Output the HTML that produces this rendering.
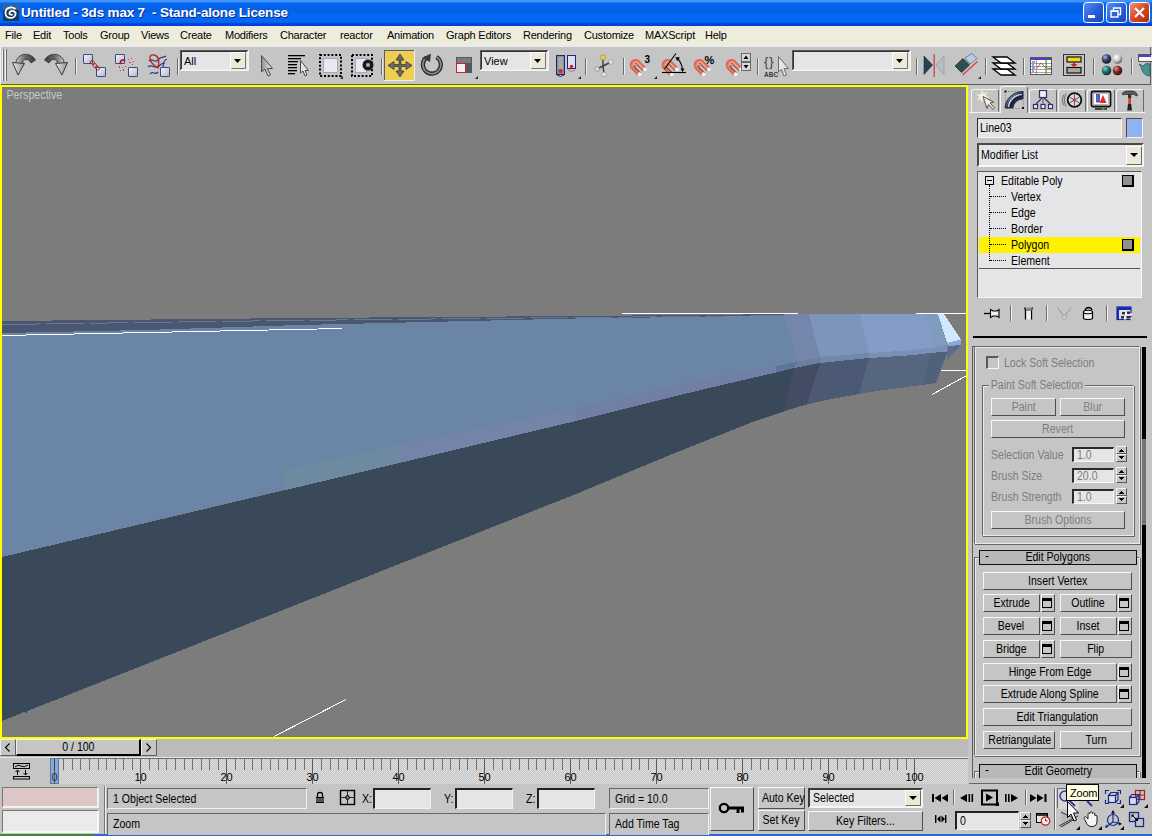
<!DOCTYPE html>
<html>
<head>
<meta charset="utf-8">
<title>3ds max 7</title>
<style>
html,body{margin:0;padding:0;}
body{width:1152px;height:836px;overflow:hidden;background:#c5c5c5;font-family:"Liberation Sans",sans-serif;font-size:11px;color:#000;position:relative;}
.a{position:absolute;}
.t{position:absolute;white-space:nowrap;line-height:14px;font-size:12px;}
/* title */
#title{left:0;top:0;width:1152px;height:26px;background:linear-gradient(#3d95fc 0px,#3d95fc 1.5px,#0c6af0 3px,#0562ea 5px,#0560e8 12px,#0568f5 14px,#0568f5 22px,#0448de 23.5px,#033cd0 26px);}
#title .txt{left:21px;top:5px;font-size:13.5px;font-weight:bold;color:#fff;line-height:16px;text-shadow:1px 1px 0 #0a2a80;letter-spacing:-0.18px;}
.cb{position:absolute;top:2px;width:19px;height:19px;border:1px solid #fff;border-radius:3px;background:linear-gradient(135deg,#4a86ee,#2558d6 60%,#1c46b8);}
/* menu */
#menu{left:0;top:26px;width:1152px;height:19px;background:#eeeddc;}
#menu span{position:absolute;top:2px;font-size:11px;line-height:14px;white-space:nowrap;letter-spacing:-0.22px;}
/* toolbar */
#tb{left:0;top:46px;width:1152px;height:39px;background:#c5c5c5;}
/* viewport */
#vp{left:0;top:85px;width:968px;height:654px;background:#ffff00;}
#vp svg{position:absolute;left:2px;top:2px;}
/* panel */
#panel{left:968px;top:85px;width:184px;height:693px;background:#c5c5c5;}
.btn{position:absolute;height:16px;border:1px solid;border-color:#f4f4f4 #5a5a5a #5a5a5a #f4f4f4;background:#c5c5c5;font-size:12px;line-height:16px;text-align:center;white-space:nowrap;box-sizing:content-box;}
.dis{color:#7d7d7d;}

.x{position:absolute;white-space:nowrap;font-size:12px;line-height:13px;margin-top:1px;transform:scaleX(.88);transform-origin:0 0;}
.s{display:inline-block;transform:scaleX(.88);transform-origin:50% 50%;}
.sunk{position:absolute;box-sizing:border-box;border:1px solid;border-color:#4a4a4a #f6f6f6 #f6f6f6 #4a4a4a;background:#e5e5e7;}
.rb{position:absolute;box-sizing:border-box;border:1px solid;border-color:#f6f6f6 #4e4e4e #4e4e4e #f6f6f6;background:#c5c5c5;font-size:12px;line-height:15px;text-align:center;white-space:nowrap;}
.rb.d{color:#808080;line-height:16px;}
.set{position:absolute;box-sizing:border-box;width:14px;height:18px;border:1px solid;border-color:#f6f6f6 #4e4e4e #4e4e4e #f6f6f6;background:#c5c5c5;}
.set i{position:absolute;left:0px;top:3px;width:8px;height:6px;border:1px solid #000;border-top-width:3px;background:#c5c5c5;}
.roll{position:absolute;box-sizing:border-box;border:1px solid;border-color:#666 #eaeaea #eaeaea #666;box-shadow:inset 1px 1px 0 #eaeaea, 1px 1px 0 #666;}
.rh{position:absolute;box-sizing:border-box;height:15px;background:#b8b8b8;border:1px solid;border-color:#111;font-size:12px;line-height:12px;text-align:center;}
.rh b{position:absolute;left:5px;top:-1px;font-weight:normal;}
.tab{position:absolute;top:89px;width:28px;height:23px;box-sizing:border-box;border:1px solid;border-color:#f4f4f4 #6a6a6a transparent #f4f4f4;border-radius:3px 3px 0 0;background:#c5c5c5;}
.sep{position:absolute;width:1px;background:#6e6e6e;box-shadow:1px 0 0 #f0f0f0;}
.spin{position:absolute;width:11px;height:16px;}
.spin:before,.spin:after{content:"";position:absolute;left:0;width:11px;height:8px;box-sizing:border-box;border:1px solid;border-color:#f4f4f4 #555 #555 #f4f4f4;background:
 linear-gradient(#000,#000) 4px 2px/1px 1px no-repeat,linear-gradient(#000,#000) 3px 3px/3px 1px no-repeat,linear-gradient(#000,#000) 2px 4px/5px 1px no-repeat,#c5c5c5;}
.spin:before{top:0;}
.spin:after{top:8px;transform:scaleY(-1);border-color:#555 #555 #f4f4f4 #f4f4f4;}
</style>
</head>
<body>
<!-- TITLE BAR -->
<div id="title" class="a">
  <div class="t txt">Untitled - 3ds max 7&nbsp; - Stand-alone License</div>
  <svg class="a" style="left:0;top:0" width="1152" height="26" viewBox="0 0 1152 26">
  <defs><linearGradient id="cbb" x1="0" y1="0" x2="1" y2="1"><stop offset="0" stop-color="#5b92f4"/><stop offset=".5" stop-color="#2a5fdc"/><stop offset="1" stop-color="#1a44b4"/></linearGradient>
  <linearGradient id="cbr" x1="0" y1="0" x2="1" y2="1"><stop offset="0" stop-color="#f09a78"/><stop offset=".5" stop-color="#d8481e"/><stop offset="1" stop-color="#b02a0c"/></linearGradient></defs>
  <rect x="3" y="5" width="16" height="16" fill="#163c5c"/><rect x="3" y="5" width="16" height="5" fill="#5c7c94" opacity=".6"/>
  <path d="M15.500,9 C11,5.500 5,8 5.500,13.500 C6,19 14,19.500 15.500,14.500 C16.500,11 11,9.500 9.500,12.500 C8.800,14.500 11.500,15.500 12.500,14" fill="none" stroke="#fff" stroke-width="1.700"/>
  <rect x="1083.500" y="2.500" width="20" height="20" rx="3" fill="url(#cbb)" stroke="#fff"/><rect x="1088" y="15" width="7" height="3" fill="#fff"/>
  <rect x="1106.500" y="2.500" width="20" height="20" rx="3" fill="url(#cbb)" stroke="#fff"/>
  <path d="M1113.500,10.500 V8 H1120.500 V14.500 H1118" fill="none" stroke="#fff" stroke-width="1.400"/><rect x="1111" y="11" width="7" height="6" fill="none" stroke="#fff" stroke-width="1.400"/><rect x="1111" y="10.500" width="7" height="1.500" fill="#fff"/>
  <rect x="1129.500" y="2.500" width="20" height="20" rx="3" fill="url(#cbr)" stroke="#fff"/><path d="M1135,8 L1144,17 M1144,8 L1135,17" stroke="#fff" stroke-width="2.200"/>
  </svg>
</div>
<!-- MENU -->
<div id="menu" class="a">
<span style="left:5px">File</span><span style="left:33px">Edit</span><span style="left:63px">Tools</span><span style="left:100px">Group</span><span style="left:141px">Views</span><span style="left:180px">Create</span><span style="left:225px">Modifiers</span><span style="left:280px">Character</span><span style="left:340px">reactor</span><span style="left:387px">Animation</span><span style="left:446px">Graph Editors</span><span style="left:523px">Rendering</span><span style="left:584px">Customize</span><span style="left:645px">MAXScript</span><span style="left:705px">Help</span>
</div>
<!-- TOOLBAR -->
<!--TB--><svg class="a" style="left:0;top:46px" width="1152" height="39" viewBox="0 46 1152 39">
<defs>
<linearGradient id="gq" x1="0" y1="0" x2="1" y2="1"><stop offset="0" stop-color="#f4f4fa"/><stop offset="1" stop-color="#b4b8cc"/></linearGradient>
<linearGradient id="gbody" x1="0" y1="0" x2="1" y2="0"><stop offset="0" stop-color="#c8c8c8"/><stop offset=".45" stop-color="#6a6a6a"/><stop offset="1" stop-color="#3a3a3a"/></linearGradient><linearGradient id="gbody2" x1="1" y1="0" x2="0" y2="0"><stop offset="0" stop-color="#c8c8c8"/><stop offset=".45" stop-color="#6a6a6a"/><stop offset="1" stop-color="#3a3a3a"/></linearGradient><linearGradient id="gcur" x1="0" y1="0" x2="1" y2="0"><stop offset="0" stop-color="#8e8e8e"/><stop offset="1" stop-color="#f2f2f2"/></linearGradient><linearGradient id="garr" x1="0" y1="0" x2="1" y2="0"><stop offset="0" stop-color="#f0f0f0"/><stop offset="1" stop-color="#8a8a8a"/></linearGradient>
<radialGradient id="sp1" cx=".35" cy=".3" r=".7"><stop offset="0" stop-color="#aab4d8"/><stop offset=".5" stop-color="#3a4468"/><stop offset="1" stop-color="#15192c"/></radialGradient>
<radialGradient id="sp2" cx=".35" cy=".3" r=".7"><stop offset="0" stop-color="#ffffff"/><stop offset=".6" stop-color="#c8c8c8"/><stop offset="1" stop-color="#606060"/></radialGradient>
<radialGradient id="sp3" cx=".35" cy=".3" r=".7"><stop offset="0" stop-color="#7fd0c0"/><stop offset=".5" stop-color="#1e7a6e"/><stop offset="1" stop-color="#0a2e2a"/></radialGradient>
<radialGradient id="sp4" cx=".35" cy=".3" r=".7"><stop offset="0" stop-color="#e09a90"/><stop offset=".5" stop-color="#8a2a24"/><stop offset="1" stop-color="#360c0a"/></radialGradient>
</defs>
<rect x="0" y="46" width="1152" height="39" fill="#c5c5c5"/>

<rect x="1" y="84" width="1150" height="1" fill="#5a5a5a"/>
<rect x="1150" y="47" width="1" height="38" fill="#5a5a5a"/>
<rect x="2" y="49" width="1" height="32" fill="#f0f0f0"/><rect x="3" y="49" width="1" height="32" fill="#6e6e6e"/>
<rect x="5" y="49" width="1" height="32" fill="#f0f0f0"/><rect x="6" y="49" width="1" height="32" fill="#6e6e6e"/><rect x="0" y="47" width="1" height="37" fill="#f0f0f0"/>
<!-- undo -->
<path d="M16,63.500 C15.500,54.500 29,50 35.500,60 L31,63 C28.500,58 22.500,58.500 22.500,64 Z" fill="url(#gbody)" stroke="#3a3a3a" stroke-width=".9"/>
<path d="M12.500,62.500 L24.500,63.500 L18,75 Z" fill="url(#garr)" stroke="#3c3c3c" stroke-width="1" stroke-linejoin="round"/>
<!-- redo -->
<path d="M64,63.500 C64.500,54.500 51,50 44.500,60 L49,63 C51.500,58 57.500,58.500 57.500,64 Z" fill="url(#gbody2)" stroke="#3a3a3a" stroke-width=".9"/>
<path d="M67.500,62.500 L55.500,63.500 L62,75 Z" fill="url(#garr)" stroke="#3c3c3c" stroke-width="1" stroke-linejoin="round"/>
<rect x="75" y="58" width="1" height="17" fill="#6b6b6b"/><rect x="76" y="58" width="1" height="17" fill="#eeeeee"/>
<!-- link -->
<rect x="83.500" y="54.500" width="9" height="9" rx=".5" fill="url(#gq)" stroke="#3a4a7a"/>
<rect x="96.500" y="67.500" width="9" height="9" rx=".5" fill="url(#gq)" stroke="#3a4a7a"/>
<ellipse cx="92.500" cy="62.500" rx="1.700" ry="2.300" fill="none" stroke="#b01818" stroke-width=".9" transform="rotate(-45 92.500 62.500)"/>
<ellipse cx="95" cy="65.500" rx="1.700" ry="2.300" fill="none" stroke="#b01818" stroke-width=".9" transform="rotate(-45 95 65.500)"/>
<ellipse cx="97.500" cy="68" rx="1.700" ry="2.300" fill="none" stroke="#b01818" stroke-width=".9" transform="rotate(-45 97.500 68)"/>
<!-- unlink -->
<rect x="115.500" y="54.500" width="9" height="9" rx=".5" fill="url(#gq)" stroke="#3a4a7a"/>
<rect x="128.500" y="67.500" width="9" height="9" rx=".5" fill="url(#gq)" stroke="#3a4a7a"/>
<path d="M121,64 A2.500,2.500 0 0 1 125,61" fill="none" stroke="#b01818" stroke-width="1.600"/>
<g fill="#d04040"><rect x="128" y="59" width="1" height="1"/><rect x="131" y="58" width="1" height="1"/><rect x="133" y="61" width="1" height="1"/><rect x="129" y="62" width="2" height="1"/><rect x="132" y="64" width="1" height="1"/><rect x="119" y="66" width="1" height="2"/><rect x="122" y="67" width="1" height="1"/><rect x="120" y="70" width="1" height="1"/><rect x="123" y="69" width="1" height="2"/><rect x="125" y="66" width="1" height="1"/></g>
<!-- bind to space warp -->
<g fill="none" stroke-width="1.300"><path d="M149,61 C152,57 155,64 158,60 S163,58 166,56" stroke="#2a3a8a"/><path d="M148,67 C152,63 155,70 159,66 S162,64 165,63" stroke="#2a3a8a"/><path d="M150,74 C153,70 155,76 158,72" stroke="#2a3a8a"/><path d="M163,68 C163,62 164,60 167,59" stroke="#2a3a8a"/>
<path d="M158,68 C148,62 148,54 154,55 C160,56 159,64 158,68 Z" stroke="#c02020"/></g>
<rect x="160.500" y="67.500" width="9" height="9" rx=".5" fill="url(#gq)" stroke="#3a4a7a"/>
<rect x="177" y="58" width="1" height="17" fill="#6b6b6b"/><rect x="178" y="58" width="1" height="17" fill="#eeeeee"/>
<rect x="180" y="50" width="69" height="21" fill="#f4f4f4"/><rect x="180" y="50" width="68" height="20" fill="#555"/><rect x="181" y="51" width="67" height="19" fill="#eeeeee"/><rect x="181" y="51" width="66" height="18" fill="#333"/><rect x="182" y="52" width="65" height="17" fill="#e5e5e7"/>
<rect x="230" y="52" width="16" height="17" fill="#ece9d8"/><path d="M230.5,68.5 V52.5 H246" stroke="#fff" fill="none"/><path d="M231.5,68.5 H245.5 V52.5" stroke="#77756a" fill="none"/><polygon points="234,59 241,59 237.5,63" fill="#000"/><text x="184" y="65" font-size="11" font-family="Liberation Sans, sans-serif" fill="#000">All</text>
<!-- select arrow -->
<path d="M261.500,55.500 V72 L265,69 L268,76 L270.500,75 L267.500,68.500 L272.500,68.500 Z" fill="url(#gcur)" stroke="#4a4a4a" stroke-width="1"/>
<!-- select by name -->
<g fill="#000"><rect x="288" y="55" width="17" height="1.300"/><rect x="288" y="58" width="13" height="1.300"/><rect x="288" y="61" width="10" height="1.300"/><rect x="288" y="64" width="9" height="1.300"/><rect x="288" y="67" width="9" height="1.300"/><rect x="288" y="70" width="9" height="1.300"/><rect x="288" y="73" width="7" height="1.300"/></g>
<path d="M300.500,60.500 V73 L303,71 L305,76 L307,75 L305,70.500 L308.500,70.500 Z" fill="#e4e4e4" stroke="#4a4a4a" stroke-width="1"/>
<!-- rect region -->
<rect x="320" y="55" width="21" height="21" fill="none" stroke="#000" stroke-width="2" stroke-dasharray="2 1.800"/>
<rect x="323.500" y="58.500" width="14" height="14" fill="#e8e8f0" stroke="#a8a8b8"/>
<polygon points="340,79 343,79 343,76" fill="#222"/>
<!-- window crossing -->
<rect x="352" y="55" width="20" height="21" fill="none" stroke="#000" stroke-width="2" stroke-dasharray="2 1.800"/>
<rect x="355.500" y="58.500" width="11" height="14" fill="#e8e8f0" stroke="#a8a8b8"/>
<circle cx="368" cy="65" r="5.500" fill="#1a1a1a"/><circle cx="368" cy="65" r="2" fill="#b0b0b0"/>
<rect x="381" y="58" width="1" height="17" fill="#6b6b6b"/><rect x="382" y="58" width="1" height="17" fill="#eeeeee"/>
<!-- move (active) -->
<rect x="384" y="50" width="31" height="31" fill="#efefef"/><rect x="384" y="50" width="30" height="30" fill="#5c5c5c"/><rect x="385" y="51" width="29" height="29" fill="#e8d070"/>
<rect x="386" y="52" width="28" height="27" fill="#efcf4f"/>
<path d="M400,54 L404,60 L401,60 L401,64.500 L406,64.500 L406,61.500 L412,65.500 L406,69.500 L406,66.500 L401,66.500 L401,71 L404,71 L400,77 L396,71 L399,71 L399,66.500 L394,66.500 L394,69.500 L388,65.500 L394,61.500 L394,64.500 L399,64.500 L399,60 L396,60 Z" fill="#6a6a6a" stroke="#3a3a3a" stroke-width=".8"/>
<!-- rotate -->
<path d="M426.500,57.500 A9,9 0 1 0 436.500,57" fill="none" stroke="#2a2a2a" stroke-width="4.200"/>
<path d="M426.500,57.500 A9,9 0 1 0 436.500,57" fill="none" stroke="#8a8a8a" stroke-width="1.600"/>
<path d="M422,58 L431,53.500 L430,62 Z" fill="#3a3a3a"/>
<!-- scale -->
<rect x="456" y="57" width="16" height="16" fill="#55585e"/><rect x="457" y="58" width="14" height="5" fill="#777a82"/>
<rect x="456.500" y="63.500" width="9" height="9" fill="#f0f0f0" stroke="#d02020"/>
<polygon points="475,79 478,79 478,76" fill="#222"/>
<rect x="480" y="50" width="69" height="21" fill="#f4f4f4"/><rect x="480" y="50" width="68" height="20" fill="#555"/><rect x="481" y="51" width="67" height="19" fill="#eeeeee"/><rect x="481" y="51" width="66" height="18" fill="#333"/><rect x="482" y="52" width="65" height="17" fill="#e5e5e7"/>
<rect x="530" y="52" width="16" height="17" fill="#ece9d8"/><path d="M530.5,68.5 V52.5 H546" stroke="#fff" fill="none"/><path d="M531.5,68.5 H545.5 V52.5" stroke="#77756a" fill="none"/><polygon points="534,59 541,59 537.5,63" fill="#000"/><text x="484" y="65" font-size="11" font-family="Liberation Sans, sans-serif" fill="#000">View</text>
<!-- pivot -->
<rect x="556.500" y="55.500" width="8" height="19" fill="#8a8a8a" stroke="#1a2a7a"/><rect x="558" y="57" width="5" height="12" fill="#a8a8a8"/>
<circle cx="560.500" cy="71" r="2" fill="#e02020"/><path d="M557,75 Q560.500,78 564,75" stroke="#1a2a7a" fill="none"/>
<rect x="567.500" y="55.500" width="8" height="13" fill="#e0e0ea" stroke="#1a2a7a"/><circle cx="571.500" cy="66.500" r="1.800" fill="#e02020"/><path d="M568,70 Q571.500,73 575,70" stroke="#c07070" fill="none"/>
<polygon points="578,79 581,79 581,76" fill="#222"/>
<rect x="585" y="58" width="1" height="17" fill="#6b6b6b"/><rect x="586" y="58" width="1" height="17" fill="#eeeeee"/>
<!-- manipulate -->
<g stroke="#3a3a3a" stroke-width="1.400"><line x1="603" y1="66" x2="603" y2="57"/><line x1="603" y1="66" x2="611" y2="62"/><line x1="603" y1="66" x2="597" y2="69"/><line x1="603" y1="66" x2="604" y2="74"/></g>
<circle cx="603" cy="57.500" r="2.600" fill="#e8d040" stroke="#9a8820" stroke-width=".6"/><circle cx="611" cy="62" r="2.400" fill="#e0e0e0" stroke="#888" stroke-width=".6"/><circle cx="597" cy="69" r="2.400" fill="#d8d8d8" stroke="#888" stroke-width=".6"/><circle cx="604" cy="74.500" r="2.400" fill="#e0e0e0" stroke="#888" stroke-width=".6"/>
<rect x="623" y="58" width="1" height="17" fill="#6b6b6b"/><rect x="624" y="58" width="1" height="17" fill="#eeeeee"/>
<g transform="translate(630,60)"><path d="M9.3,14 L2.8,7.3 A3.55,3.55 0 0 1 7.8,2.3 L14.6,9.2" fill="none" stroke="#b84a38" stroke-width="4.400"/><path d="M9.3,14 L2.8,7.3 A3.55,3.55 0 0 1 7.8,2.3 L14.6,9.2" fill="none" stroke="#ea735c" stroke-width="3.200"/><path d="M3.200,5.600 A3,3 0 0 1 7,2.200 L12.500,7.800" fill="none" stroke="#f8b4a2" stroke-width="1.100"/><path d="M10,13 L5,8 A1.600,1.600 0 0 1 7.300,5.600 L12.800,11" fill="none" stroke="#3a3030" stroke-width=".7" opacity=".75"/><rect x="8" y="12.600" width="3.200" height="3.200" fill="#fafafa" transform="rotate(45 9.600 14.200)"/><rect x="13.200" y="7.600" width="3.200" height="3.200" fill="#fafafa" transform="rotate(45 14.800 9.200)"/></g>
<text x="644.500" y="63" font-size="10" font-weight="bold" font-family="Liberation Sans, sans-serif" fill="#000">3</text>
<polygon points="654,79 657,79 657,76" fill="#222"/>
<g transform="translate(662,60)"><path d="M9.3,14 L2.8,7.3 A3.55,3.55 0 0 1 7.8,2.3 L14.6,9.2" fill="none" stroke="#b84a38" stroke-width="4.400"/><path d="M9.3,14 L2.8,7.3 A3.55,3.55 0 0 1 7.8,2.3 L14.6,9.2" fill="none" stroke="#ea735c" stroke-width="3.200"/><path d="M3.200,5.600 A3,3 0 0 1 7,2.200 L12.500,7.800" fill="none" stroke="#f8b4a2" stroke-width="1.100"/><path d="M10,13 L5,8 A1.600,1.600 0 0 1 7.300,5.600 L12.800,11" fill="none" stroke="#3a3030" stroke-width=".7" opacity=".75"/><rect x="8" y="12.600" width="3.200" height="3.200" fill="#fafafa" transform="rotate(45 9.600 14.200)"/><rect x="13.200" y="7.600" width="3.200" height="3.200" fill="#fafafa" transform="rotate(45 14.800 9.200)"/></g>
<g stroke="#000" stroke-width="1.100" fill="none"><line x1="662" y1="72.500" x2="686" y2="72.500"/><line x1="664.500" y1="69" x2="676" y2="53.500"/><path d="M677.500,58.500 Q682,63 682.500,70"/></g><path d="M675.500,57 L680,57.500 L677,61 Z M680.500,68.500 L684.500,68.500 L682.500,72 Z" fill="#000"/>
<g transform="translate(694,60)"><path d="M9.3,14 L2.8,7.3 A3.55,3.55 0 0 1 7.8,2.3 L14.6,9.2" fill="none" stroke="#b84a38" stroke-width="4.400"/><path d="M9.3,14 L2.8,7.3 A3.55,3.55 0 0 1 7.8,2.3 L14.6,9.2" fill="none" stroke="#ea735c" stroke-width="3.200"/><path d="M3.200,5.600 A3,3 0 0 1 7,2.200 L12.500,7.800" fill="none" stroke="#f8b4a2" stroke-width="1.100"/><path d="M10,13 L5,8 A1.600,1.600 0 0 1 7.300,5.600 L12.800,11" fill="none" stroke="#3a3030" stroke-width=".7" opacity=".75"/><rect x="8" y="12.600" width="3.200" height="3.200" fill="#fafafa" transform="rotate(45 9.600 14.200)"/><rect x="13.200" y="7.600" width="3.200" height="3.200" fill="#fafafa" transform="rotate(45 14.800 9.200)"/></g>
<text x="704.500" y="63.500" font-size="11" font-weight="bold" font-family="Liberation Sans, sans-serif" fill="#000">%</text>
<g transform="translate(726,60)"><path d="M9.3,14 L2.8,7.3 A3.55,3.55 0 0 1 7.8,2.3 L14.6,9.2" fill="none" stroke="#b84a38" stroke-width="4.400"/><path d="M9.3,14 L2.8,7.3 A3.55,3.55 0 0 1 7.8,2.3 L14.6,9.2" fill="none" stroke="#ea735c" stroke-width="3.200"/><path d="M3.200,5.600 A3,3 0 0 1 7,2.200 L12.500,7.800" fill="none" stroke="#f8b4a2" stroke-width="1.100"/><path d="M10,13 L5,8 A1.600,1.600 0 0 1 7.300,5.600 L12.800,11" fill="none" stroke="#3a3030" stroke-width=".7" opacity=".75"/><rect x="8" y="12.600" width="3.200" height="3.200" fill="#fafafa" transform="rotate(45 9.600 14.200)"/><rect x="13.200" y="7.600" width="3.200" height="3.200" fill="#fafafa" transform="rotate(45 14.800 9.200)"/></g>
<rect x="741" y="53" width="10" height="18" fill="#6a6a6a"/><rect x="742" y="54" width="8" height="7" fill="#d8d8d8"/><rect x="742" y="63" width="8" height="7" fill="#d8d8d8"/><path d="M743.500,59 L746,55.500 L748.500,59 Z M743.500,65 L746,68.500 L748.500,65 Z" fill="#000"/>
<rect x="757" y="58" width="1" height="17" fill="#6b6b6b"/><rect x="758" y="58" width="1" height="17" fill="#eeeeee"/>
<!-- named selection -->
<text x="764" y="66" font-size="13" font-family="Liberation Sans, sans-serif" fill="#3a3a3a" letter-spacing="1">{}</text>
<text x="764" y="76.500" font-size="6.500" font-weight="bold" font-family="Liberation Sans, sans-serif" fill="#3a3a3a">ABC</text>
<path d="M778.500,56.500 V72 L781.500,69.500 L784,76 L786.500,75 L784,68.500 L788.500,68.500 Z" fill="#e5e5e7" stroke="#6a6a6a" stroke-width="1"/>
<rect x="792" y="50" width="119" height="21" fill="#f4f4f4"/><rect x="792" y="50" width="118" height="20" fill="#555"/><rect x="793" y="51" width="117" height="19" fill="#eeeeee"/><rect x="793" y="51" width="116" height="18" fill="#333"/><rect x="794" y="52" width="115" height="17" fill="#e5e5e7"/>
<rect x="892" y="52" width="16" height="17" fill="#ece9d8"/><path d="M892.5,68.5 V52.5 H908" stroke="#fff" fill="none"/><path d="M893.5,68.5 H907.5 V52.5" stroke="#77756a" fill="none"/><polygon points="896,59 903,59 899.5,63" fill="#000"/>
<rect x="916" y="58" width="1" height="17" fill="#6b6b6b"/><rect x="917" y="58" width="1" height="17" fill="#eeeeee"/>
<!-- mirror -->
<path d="M924,56 L932.500,65 L924,74.500 Z" fill="#2a4250" stroke="#1a2a32" stroke-width=".6"/><rect x="933.500" y="54" width="1.400" height="23" fill="#c85050"/><path d="M944,56 L936,65 L944,74.500 Z" fill="#b8bcc4" stroke="#8a8e96" stroke-width=".6"/>
<!-- align -->
<path d="M955,66 L963,58.500 L969.500,65 L961.500,72.500 Z" fill="#2e4e52" stroke="#1a3034" stroke-width=".8"/><path d="M965,58 L972,53.500 L977,58.500 L970,64 Z" fill="#b8cce4" stroke="#5a6a7a" stroke-width=".8"/><line x1="962.500" y1="75" x2="977.500" y2="61.500" stroke="#e04040" stroke-width="1.400"/>
<polygon points="978,79 981,79 981,76" fill="#222"/>
<rect x="985" y="58" width="1" height="17" fill="#6b6b6b"/><rect x="986" y="58" width="1" height="17" fill="#eeeeee"/>
<!-- layers -->
<g fill="#fff" stroke="#000" stroke-width="1.300" stroke-linejoin="miter"><path d="M993,69 L1007,69 L1015,75 L1001,75 Z"/><path d="M993,63 L1007,63 L1015,69 L1001,69 Z"/><path d="M993,57 L1007,57 L1015,63 L1001,63 Z"/></g>
<rect x="1023" y="58" width="1" height="17" fill="#6b6b6b"/><rect x="1024" y="58" width="1" height="17" fill="#eeeeee"/>
<!-- curve editor -->
<rect x="1030.500" y="57.500" width="21" height="17" fill="#fff" stroke="#555"/><rect x="1031" y="58" width="20" height="2" fill="#4a40c8"/>
<g stroke="#888" stroke-width=".8"><line x1="1031" y1="63.500" x2="1051" y2="63.500"/><line x1="1031" y1="66.500" x2="1051" y2="66.500"/><line x1="1031" y1="69.500" x2="1051" y2="69.500"/><line x1="1031" y1="72.500" x2="1051" y2="72.500"/><line x1="1036.500" y1="60" x2="1036.500" y2="74"/></g>
<g fill="#3030c0"><rect x="1032" y="61.500" width="3" height="1"/><rect x="1032" y="64.500" width="2" height="1"/><rect x="1032" y="67.500" width="3" height="1"/><rect x="1032" y="70.500" width="2" height="1"/></g>
<path d="M1037,68 L1041,63 L1043,65 L1046,68 L1051,68.500" stroke="#d04040" fill="none" stroke-width="1"/><rect x="1045.500" y="60" width="1.200" height="14.500" fill="#30a030"/>
<!-- schematic -->
<rect x="1063.500" y="54.500" width="21" height="21" fill="#c5c5c5" stroke="#333"/><rect x="1067" y="57" width="14" height="5" fill="#f0d820" stroke="#111" stroke-width="1.200"/><rect x="1067" y="67.500" width="14" height="5.500" fill="#a8a8a8" stroke="#111" stroke-width="1.200"/><path d="M1073,62.500 H1075 V64 H1077.500 L1074,67 L1070.500,64 H1073 Z" fill="#d02020"/>
<rect x="1093" y="58" width="1" height="17" fill="#6b6b6b"/><rect x="1094" y="58" width="1" height="17" fill="#eeeeee"/>
<!-- material editor -->
<circle cx="1106.500" cy="59" r="4.800" fill="url(#sp1)"/><circle cx="1117.500" cy="59" r="4.800" fill="url(#sp2)"/><circle cx="1106.500" cy="70.500" r="4.800" fill="url(#sp3)"/><circle cx="1117.500" cy="70.500" r="4.800" fill="url(#sp4)"/>
<rect x="1131" y="58" width="1" height="17" fill="#6b6b6b"/><rect x="1132" y="58" width="1" height="17" fill="#eeeeee"/>
<!-- render scene (cut) -->
<rect x="1138.500" y="54.500" width="14" height="7" fill="#f4f4f4" stroke="#555"/><rect x="1139" y="55" width="12" height="2" fill="#4a40c8"/>
<path d="M1139,64 Q1141,66 1142,70 Q1144,76 1150,76 V64 Q1146,62 1143,66 Z" fill="#4a9090" stroke="#2a5a5a" stroke-width=".8"/>
</svg><!--/TB-->
<div class="a" style="left:0;top:45px;width:1152px;height:2px;background:#ebebeb;"></div>
<!-- VIEWPORT -->
<div id="vp" class="a">
<svg width="964" height="650" viewBox="2 87 964 650" shape-rendering="crispEdges">
  <rect x="2" y="87" width="964" height="650" fill="#7c7c7c"/>
  <!-- main light face (A) -->
  <polygon points="2,321 576,316 784,314 797,362 776,366 726,375 676,385 576,408 288,469 283,470 283,490 2,557" fill="#6b85a6"/>
  <!-- top dark band -->
  <polygon points="2,321 300,318 576,316 800,314 938,314 938,315 800,315.5 576,318.5 300,325 144,330 2,333" fill="#4b5771"/>
  <polyline points="2,324.5 144,322.5 288,320.5 576,317.5 800,315.5" fill="none" stroke="#7a90b4" stroke-width="1" stroke-dasharray="38 6" opacity="0.6"/>
  <!-- light face facets B..E -->
  <polygon points="784,314 809,314 820,357 797,362" fill="#7486ab"/>
  <polygon points="809,314 860,314 869,353 820,357" fill="#7d95bd"/>
  <polygon points="860,314 925,314 935,347 914,350 869,353" fill="#849cc6"/>
  <polygon points="925,314 938,314 947,345 935,347" fill="#7f9cc0"/>
  <!-- ledge strip -->
  <polygon points="283,470 288,469 400,445 400,463 288,489.5 283,490.5" fill="#6e8aa1"/>
  <polygon points="400,445 576,408 576,421 400,463" fill="#7484a8"/>
  <polygon points="576,408 676,385 726,375 776,366 776,372.5 726,384 676,396 576,421" fill="#707fa3"/>
  <polygon points="776,366 797,362 794,368 776,372.5" fill="#5f7597"/>
  <polygon points="797,362 820,357 820,363 794,368" fill="#6b7fa3"/>
  <polygon points="820,357 869,353 869,358 820,363" fill="#7088aa"/>
  <polygon points="869,353 914,350 935,347 947,345 947.5,351.5 930,353 914,355 869,358" fill="#7a90b5"/>
  <!-- dark face A -->
  <polygon points="2,557 283,490.5 288,489.5 576,421 676,396 726,384 776,372.5 794,368 784,411.5 751,422.5 676,452.5 576,494 288,608 144,665 2,721" fill="#39495a"/>
  <!-- dark facets B..E -->
  <polygon points="794,368 820,363 807,404.5 801,406 784,411.5" fill="#434c62"/>
  <polygon points="820,363 869,358 859,394 826,400 811,403.5 807,404.5" fill="#4b5975"/>
  <polygon points="869,358 914,355 930,353 922,385 914,386 880,390.5 859,394" fill="#56667f"/>
  <polygon points="930,353 947.5,351.5 936,383 922,385" fill="#50627a"/>
  <!-- end cap -->
  <polygon points="938,314 944,314 961,339.5 947,343" fill="#d0e8ff"/>
  <polygon points="947,343 961,339.5 961,345 948,346" fill="#8ca6d4"/>
  <polygon points="948,346 961,345 947,360 947.5,351.5" fill="#5a6d8e"/>
  <rect x="22" y="712" width="3" height="1" fill="#20a040"/><rect x="26" y="710" width="1" height="3" fill="#2030c0"/>
  <!-- white wire lines -->
  <g stroke="#ffffff" stroke-width="1" fill="none">
    <line x1="2" y1="335.5" x2="342" y2="328.5"/>
    <line x1="622" y1="313.5" x2="798" y2="313.5"/>
    <line x1="916" y1="313.5" x2="966" y2="313.5"/>
    <line x1="941" y1="370.5" x2="966" y2="370.5"/>
    <line x1="932" y1="394.5" x2="966" y2="376"/>
    <line x1="274" y1="736.5" x2="346" y2="699.5"/>
  </g>
  <text transform="translate(6.500,99) scale(.89,1)" font-family="Liberation Sans, sans-serif" font-size="12" fill="#c8c8c8">Perspective</text>
</svg>
</div>
<!-- PANEL -->
<div id="panel" class="a"></div>
<!-- command panel tabs -->
<div class="a" style="left:969px;top:112px;width:176px;height:1px;background:#f4f4f4;"></div>
<div class="tab" style="left:971px;"></div>
<div class="tab" style="left:1000px;top:86px;height:27px;width:28px;border-bottom:0;"></div>
<div class="tab" style="left:1029px;"></div>
<div class="tab" style="left:1058px;"></div>
<div class="tab" style="left:1087px;"></div>
<div class="tab" style="left:1116px;"></div>
<!-- panel icons -->
<svg class="a" style="left:968px;top:85px" width="184" height="240" viewBox="968 85 184 240">
<defs><linearGradient id="pipe" x1="0" y1="0" x2="1" y2="1"><stop offset="0" stop-color="#c8d0e8"/><stop offset=".35" stop-color="#5a6890"/><stop offset=".6" stop-color="#20283c"/><stop offset="1" stop-color="#6a7aa0"/></linearGradient></defs>
<!-- create: star + arrow -->
<path d="M982.500,90 L983.800,94 L987.500,92 L985.500,95.500 L989,97 L985.500,98.200 L987,102 L983.500,99.500 L981.500,103 L981,99 L977,100 L979.500,97 L976.500,94.500 L980.500,94.200 Z" fill="#f4f2e0" stroke="#dcd8c0" stroke-width=".5"/>
<path d="M983,96.500 L993.500,102 L990,103 L994.500,108 L993,109.500 L988.500,104.500 L987,108.500 Z" fill="#f0f0f0" stroke="#5a5040" stroke-width="1"/>
<!-- modify: pipe arc -->
<path d="M1005.500,91.500 H1023.500 V108.500 H1005.500 Z" fill="none" stroke="#555" stroke-width=".8" stroke-dasharray="1 2"/>
<path d="M1005,108 A18,17 0 0 1 1023,91.500 L1023,99 A10,9.500 0 0 0 1013,108 Z" fill="url(#pipe)" stroke="#1c2234" stroke-width=".8"/>
<path d="M1008.500,107 A14,13.500 0 0 1 1022,94.500" fill="none" stroke="#dfe6f8" stroke-width="1.200"/>
<path d="M1010.800,107.500 A12,11.500 0 0 1 1022.500,96.500" fill="none" stroke="#1c2234" stroke-width="1.600"/>
<rect x="1004.500" y="90.500" width="2" height="2" fill="#111"/><rect x="1022" y="107" width="2" height="2" fill="#111"/>
<!-- hierarchy -->
<g stroke="#3a2a6a" stroke-width="1.200" fill="#f2f0fa"><path d="M1043,97 L1036,104 M1043,97 L1050.500,104" fill="none"/><rect x="1042" y="97" width="2" height="8" fill="#909090" stroke="none"/><rect x="1039.500" y="90.500" width="7" height="7"/><rect x="1033.500" y="104.500" width="4" height="4"/><rect x="1041" y="104.500" width="4" height="4"/><rect x="1048.500" y="104.500" width="4" height="4"/></g>
<!-- motion -->
<circle cx="1074.500" cy="100" r="6.800" fill="#dcdce4" stroke="#111" stroke-width="1.800"/>
<g stroke="#445" stroke-width=".9"><path d="M1074.500,94.500 V105.500 M1069.700,97.200 L1079.300,102.800 M1069.700,102.800 L1079.300,97.200"/></g><circle cx="1074.500" cy="100" r="1.700" fill="#e03030"/>
<path d="M1066,93.500 Q1062.500,100 1066,106.500 M1063.500,95 Q1061,100 1063.500,105" fill="none" stroke="#666" stroke-width=".9"/>
<!-- display -->
<rect x="1091.500" y="91.500" width="19" height="15" rx="1.500" fill="#fafafa" stroke="#111" stroke-width="1.800"/><rect x="1093.500" y="93.500" width="15" height="11" fill="none" stroke="#888" stroke-width=".6"/>
<rect x="1096.500" y="94.500" width="3" height="7.500" fill="#5060d0" stroke="#2a2a8a" stroke-width=".6"/><path d="M1103,95 L1106.500,103 H1099.500 Z" fill="#e02828"/>
<rect x="1095" y="108" width="12" height="2" fill="#444"/><rect x="1102" y="108" width="2.500" height="1.500" fill="#30c040"/>
<!-- utilities hammer -->
<path d="M1122,93.500 Q1124,90.500 1128,91 H1133 Q1136.500,91.500 1137.500,95.500 L1136,96 Q1135,93.800 1132,94.500 H1127.500 Q1124,94 1123,95 Z" fill="#5a5a66" stroke="#222" stroke-width=".7"/>
<rect x="1128" y="94" width="3.200" height="4" fill="#333"/><rect x="1128.200" y="98" width="2.800" height="6" fill="#d84020"/><path d="M1128,104 H1131.200 L1132,110.500 H1127.200 Z" fill="#222"/>
<!-- stack buttons -->
<g stroke="#000" fill="none"><path d="M984,313.500 H991" stroke-width="1.300"/><path d="M990.500,309.500 L993,311 H997 L999,309.500 V317.500 L997,316 H993 L990.500,317.500 Z" fill="#f0f0f0" stroke-width="1.100"/></g>
<path d="M1024.500,307.500 Q1025.500,309 1025.500,311 V319.500 M1032.500,307.500 Q1031.500,309 1031.500,311 V319.500" stroke="#000" stroke-width="1.300" fill="none"/><rect x="1026.500" y="311" width="4.400" height="8.500" fill="#f0f0f0"/><rect x="1026" y="307.500" width="5.500" height="3.500" fill="#8a8a8a"/>
<path d="M1057.500,307.500 L1063.500,316 M1071,307.500 L1065,316" stroke="#9a9a9a" stroke-width="1" fill="none"/><circle cx="1064.200" cy="317" r="2" fill="#d8d8d8" stroke="#9a9a9a" stroke-width=".8"/><path d="M1062,312.500 l1.500,2.500 M1066.500,312.500 l-1.500,2.500" stroke="#b0b0b0"/>
<path d="M1083.500,312 V318 Q1083.500,319.500 1088,319.500 Q1092.500,319.500 1092.500,318 V312" fill="#f0f0f0" stroke="#000" stroke-width="1.200"/><ellipse cx="1088" cy="312" rx="4.500" ry="1.800" fill="#f0f0f0" stroke="#000" stroke-width="1.100"/><path d="M1085,311 Q1085.500,307.500 1089,307.500 Q1091.500,308 1092,310" fill="none" stroke="#000" stroke-width="1.300"/>
<rect x="1117" y="307" width="14" height="12.500" fill="#e0e0e8" stroke="#1a2ab0" stroke-width="1.200"/><rect x="1117" y="307" width="14" height="3" fill="#1a2ab0"/><rect x="1117" y="310" width="2" height="9" fill="#1a2ab0"/>
<g fill="#333"><rect x="1122" y="312" width="3" height="2.500"/><rect x="1127" y="311.500" width="3" height="2.500"/><rect x="1121" y="316" width="3" height="2.500"/><rect x="1126.500" y="316" width="4" height="2.500"/></g>
<g fill="#fff"><rect x="1125" y="313" width="2" height="2"/><rect x="1130" y="313.500" width="2" height="2"/><rect x="1124" y="317.500" width="2" height="2"/><rect x="1130.500" y="317.500" width="1.500" height="2"/></g>
</svg>
<!-- name field -->
<div class="sunk" style="left:977px;top:118px;width:145px;height:20px;border-top-color:#2a2a2a;border-left-color:#2a2a2a;"></div>
<div class="x" style="left:980px;top:121px;">Line03</div>
<div class="sunk" style="left:1126px;top:118px;width:17px;height:20px;background:#8fb3ee;"></div>
<!-- modifier list -->
<div class="sunk" style="left:977px;top:143px;width:167px;height:24px;border-width:2px;border-color:#4a4a4a #f6f6f6 #f6f6f6 #4a4a4a;"></div>
<div class="x" style="left:981px;top:148px;">Modifier List</div>
<div class="a" style="left:1126px;top:146px;width:16px;height:19px;box-sizing:border-box;background:#ece9d8;border:1px solid;border-color:#fff #6a6a60 #6a6a60 #fff;"></div>
<div class="a" style="left:1130px;top:153px;border:4px solid transparent;border-top:4px solid #000;border-bottom:0;"></div>
<!-- stack -->
<div class="sunk" style="left:977px;top:171px;width:165px;height:127px;border-color:#5a5a4a #f6f6f6 #f6f6f6 #5a5a4a;background:#e5e5e7;"></div>
<div class="a" style="left:979px;top:237px;width:161px;height:16px;background:#fff200;"></div>
<div class="a" style="left:979px;top:268px;width:161px;height:1px;background:#555;"></div>
<div class="a" style="left:985px;top:176px;width:9px;height:9px;box-sizing:border-box;border:1px solid #000;"></div>
<div class="a" style="left:987px;top:180px;width:5px;height:1px;background:#000;"></div>
<div class="a" style="left:989px;top:185px;width:0;height:76px;border-left:1px dotted #000;"></div>
<div class="a" style="left:990px;top:196px;width:16px;height:0;border-top:1px dotted #000;"></div>
<div class="a" style="left:990px;top:212px;width:16px;height:0;border-top:1px dotted #000;"></div>
<div class="a" style="left:990px;top:228px;width:16px;height:0;border-top:1px dotted #000;"></div>
<div class="a" style="left:990px;top:244px;width:16px;height:0;border-top:1px dotted #000;"></div>
<div class="a" style="left:990px;top:260px;width:16px;height:0;border-top:1px dotted #000;"></div>
<div class="x" style="left:1001px;top:174px;">Editable Poly</div>
<div class="x" style="left:1011px;top:190px;">Vertex</div>
<div class="x" style="left:1011px;top:206px;">Edge</div>
<div class="x" style="left:1011px;top:222px;">Border</div>
<div class="x" style="left:1011px;top:238px;">Polygon</div>
<div class="x" style="left:1011px;top:254px;">Element</div>
<div class="a" style="left:1122px;top:175px;width:12px;height:12px;box-sizing:border-box;border:1px solid #000;border-width:1px 2px 2px 1px;background:#909090;"></div>
<div class="a" style="left:1122px;top:239px;width:12px;height:12px;box-sizing:border-box;border:1px solid #000;border-width:1px 2px 2px 1px;background:#909090;"></div>
<!-- stack buttons separators -->
<div class="sep" style="left:1010px;top:305px;height:16px;"></div>
<div class="sep" style="left:1046px;top:305px;height:16px;"></div>
<div class="sep" style="left:1106px;top:305px;height:16px;"></div>
<!-- black line -->
<div class="a" style="left:973px;top:336px;width:174px;height:2px;background:#000;"></div>
<!-- scroll indicator -->
<div class="a" style="left:1142px;top:347px;width:4px;height:431px;background:#000;"></div>
<div class="a" style="left:1142px;top:439px;width:4px;height:86px;background:#747474;"></div>
<!-- soft selection rollout tail -->
<div class="a" style="left:972px;top:346px;width:1px;height:432px;background:#5c5c5c;"></div><div class="a" style="left:972px;top:346px;width:3px;height:1px;background:#5c5c5c;"></div>
<div class="roll" style="left:974px;top:346px;width:166px;height:198px;"></div>
<div class="sunk" style="left:986px;top:356px;width:13px;height:13px;background:#c5c5c5;border-width:2px 1px 1px 2px;border-color:#5a5a5a #f6f6f6 #f6f6f6 #5a5a5a;"></div>
<div class="x dis" style="left:1004px;top:356px;">Lock Soft Selection</div>
<div class="roll" style="left:982px;top:385px;width:152px;height:151px;"></div>
<div class="x dis" style="left:989px;top:378px;background:#c5c5c5;padding:0 2px;">Paint Soft Selection</div>
<div class="rb d" style="left:991px;top:398px;width:65px;height:18px;"><span class="s">Paint</span></div>
<div class="rb d" style="left:1060px;top:398px;width:65px;height:18px;"><span class="s">Blur</span></div>
<div class="rb d" style="left:991px;top:420px;width:134px;height:18px;"><span class="s">Revert</span></div>
<div class="x dis" style="left:991px;top:448px;">Selection Value</div>
<div class="sunk" style="left:1072px;top:447px;width:42px;height:15px;border-width:2px 1px 1px 2px;border-color:#2a2a2a #f6f6f6 #f6f6f6 #2a2a2a;"></div>
<div class="x dis" style="left:1077px;top:448px;">1.0</div>
<div class="spin" style="left:1116px;top:446px;"></div>
<div class="x dis" style="left:991px;top:469px;">Brush Size</div>
<div class="sunk" style="left:1072px;top:468px;width:42px;height:15px;border-width:2px 1px 1px 2px;border-color:#2a2a2a #f6f6f6 #f6f6f6 #2a2a2a;"></div>
<div class="x dis" style="left:1077px;top:469px;">20.0</div>
<div class="spin" style="left:1116px;top:467px;"></div>
<div class="x dis" style="left:991px;top:490px;">Brush Strength</div>
<div class="sunk" style="left:1072px;top:489px;width:42px;height:15px;border-width:2px 1px 1px 2px;border-color:#2a2a2a #f6f6f6 #f6f6f6 #2a2a2a;"></div>
<div class="x dis" style="left:1077px;top:490px;">1.0</div>
<div class="spin" style="left:1116px;top:488px;"></div>
<div class="rb d" style="left:991px;top:511px;width:134px;height:18px;"><span class="s">Brush Options</span></div>
<!-- Edit Polygons rollout -->
<div class="roll" style="left:974px;top:557px;width:166px;height:199px;"></div>
<div class="rh" style="left:979px;top:550px;width:158px;"><b>-</b><span class="s">Edit Polygons</span></div>
<div class="rb" style="left:983px;top:572px;width:149px;height:18px;line-height:16px;"><span class="s">Insert Vertex</span></div>
<div class="rb" style="left:983px;top:594px;width:57px;height:18px;line-height:16px;"><span class="s">Extrude</span></div><div class="set" style="left:1041px;top:594px;"><i></i></div>
<div class="rb" style="left:1060px;top:594px;width:57px;height:18px;line-height:16px;"><span class="s">Outline</span></div><div class="set" style="left:1118px;top:594px;"><i></i></div>
<div class="rb" style="left:983px;top:617px;width:57px;height:18px;line-height:16px;"><span class="s">Bevel</span></div><div class="set" style="left:1041px;top:617px;"><i></i></div>
<div class="rb" style="left:1060px;top:617px;width:57px;height:18px;line-height:16px;"><span class="s">Inset</span></div><div class="set" style="left:1118px;top:617px;"><i></i></div>
<div class="rb" style="left:983px;top:640px;width:57px;height:18px;line-height:16px;"><span class="s">Bridge</span></div><div class="set" style="left:1041px;top:640px;"><i></i></div>
<div class="rb" style="left:1060px;top:640px;width:72px;height:18px;line-height:16px;"><span class="s">Flip</span></div>
<div class="rb" style="left:983px;top:663px;width:134px;height:18px;line-height:16px;"><span class="s">Hinge From Edge</span></div><div class="set" style="left:1118px;top:663px;"><i></i></div>
<div class="rb" style="left:983px;top:685px;width:134px;height:18px;line-height:16px;"><span class="s">Extrude Along Spline</span></div><div class="set" style="left:1118px;top:685px;"><i></i></div>
<div class="rb" style="left:983px;top:708px;width:149px;height:18px;line-height:16px;"><span class="s">Edit Triangulation</span></div>
<div class="rb" style="left:983px;top:731px;width:72px;height:18px;line-height:16px;"><span class="s">Retriangulate</span></div>
<div class="rb" style="left:1060px;top:731px;width:72px;height:18px;line-height:16px;"><span class="s">Turn</span></div>
<!-- Edit Geometry header (cut) -->
<div class="a" style="left:974px;top:764px;width:168px;height:14px;overflow:hidden;">
  <div class="roll" style="left:0;top:7px;width:166px;height:30px;"></div>
  <div class="rh" style="left:5px;top:0;width:158px;"><b>-</b><span class="s">Edit Geometry</span></div>
</div>

<!-- TIME SLIDER -->
<div class="a" style="left:0;top:739px;width:968px;height:18px;background:#bbbbbb;"></div>
<div class="rb" style="left:0;top:739px;width:16px;height:17px;border-color:#f0f0f0 #5e5e5e #5e5e5e #f0f0f0;"></div>
<div class="rb" style="left:141px;top:739px;width:16px;height:17px;border-color:#f0f0f0 #5e5e5e #5e5e5e #f0f0f0;"></div>
<div class="rb" style="left:16px;top:739px;width:125px;height:17px;border-color:#f4f4f4 #000 #000 #f4f4f4;border-width:1px 2px 2px 1px;line-height:14px;"><span class="s">0 / 100</span></div>
<svg class="a" style="left:0;top:739px" width="160" height="18" viewBox="0 739 160 18"><path d="M9.500,743.500 L5.500,747.500 L9.500,751.500 M146.500,743.500 L150.500,747.500 L146.500,751.500" fill="none" stroke="#000" stroke-width="1.100"/></svg>
<!-- TRACK BAR -->
<svg class="a" style="left:0;top:757px" width="968" height="29" viewBox="0 757 968 29">
<rect x="0" y="757" width="968" height="29" fill="#c5c5c5"/>
<defs><pattern id="chk" width="2" height="2" patternUnits="userSpaceOnUse"><rect width="2" height="2" fill="#c8c8c8"/><rect width="1" height="1" fill="#dcdcdc"/><rect x="1" y="1" width="1" height="1" fill="#dcdcdc"/></pattern></defs><rect x="50" y="758" width="918" height="26" fill="url(#chk)"/>
<rect x="0" y="757" width="968" height="1" fill="#e6e6e6"/>
<rect x="50" y="758" width="918" height="1" fill="#6a6a6a"/>
<rect x="50.500" y="758.500" width="8" height="25" fill="#8da9d8" stroke="#5a76a6"/>
<rect x="54" y="759" width="1" height="25" fill="#5a5a5a"/><rect x="63" y="759" width="1" height="11" fill="#707070"/><rect x="72" y="759" width="1" height="11" fill="#707070"/><rect x="80" y="759" width="1" height="11" fill="#707070"/><rect x="89" y="759" width="1" height="11" fill="#707070"/><rect x="98" y="759" width="1" height="11" fill="#707070"/><rect x="106" y="759" width="1" height="11" fill="#707070"/><rect x="115" y="759" width="1" height="11" fill="#707070"/><rect x="123" y="759" width="1" height="11" fill="#707070"/><rect x="132" y="759" width="1" height="11" fill="#707070"/><rect x="140" y="759" width="1" height="25" fill="#5a5a5a"/><rect x="149" y="759" width="1" height="11" fill="#707070"/><rect x="158" y="759" width="1" height="11" fill="#707070"/><rect x="166" y="759" width="1" height="11" fill="#707070"/><rect x="175" y="759" width="1" height="11" fill="#707070"/><rect x="184" y="759" width="1" height="11" fill="#707070"/><rect x="192" y="759" width="1" height="11" fill="#707070"/><rect x="201" y="759" width="1" height="11" fill="#707070"/><rect x="209" y="759" width="1" height="11" fill="#707070"/><rect x="218" y="759" width="1" height="11" fill="#707070"/><rect x="226" y="759" width="1" height="25" fill="#5a5a5a"/><rect x="235" y="759" width="1" height="11" fill="#707070"/><rect x="244" y="759" width="1" height="11" fill="#707070"/><rect x="252" y="759" width="1" height="11" fill="#707070"/><rect x="261" y="759" width="1" height="11" fill="#707070"/><rect x="270" y="759" width="1" height="11" fill="#707070"/><rect x="278" y="759" width="1" height="11" fill="#707070"/><rect x="287" y="759" width="1" height="11" fill="#707070"/><rect x="295" y="759" width="1" height="11" fill="#707070"/><rect x="304" y="759" width="1" height="11" fill="#707070"/><rect x="312" y="759" width="1" height="25" fill="#5a5a5a"/><rect x="321" y="759" width="1" height="11" fill="#707070"/><rect x="330" y="759" width="1" height="11" fill="#707070"/><rect x="338" y="759" width="1" height="11" fill="#707070"/><rect x="347" y="759" width="1" height="11" fill="#707070"/><rect x="356" y="759" width="1" height="11" fill="#707070"/><rect x="364" y="759" width="1" height="11" fill="#707070"/><rect x="373" y="759" width="1" height="11" fill="#707070"/><rect x="381" y="759" width="1" height="11" fill="#707070"/><rect x="390" y="759" width="1" height="11" fill="#707070"/><rect x="398" y="759" width="1" height="25" fill="#5a5a5a"/><rect x="407" y="759" width="1" height="11" fill="#707070"/><rect x="416" y="759" width="1" height="11" fill="#707070"/><rect x="424" y="759" width="1" height="11" fill="#707070"/><rect x="433" y="759" width="1" height="11" fill="#707070"/><rect x="442" y="759" width="1" height="11" fill="#707070"/><rect x="450" y="759" width="1" height="11" fill="#707070"/><rect x="459" y="759" width="1" height="11" fill="#707070"/><rect x="467" y="759" width="1" height="11" fill="#707070"/><rect x="476" y="759" width="1" height="11" fill="#707070"/><rect x="484" y="759" width="1" height="25" fill="#5a5a5a"/><rect x="493" y="759" width="1" height="11" fill="#707070"/><rect x="502" y="759" width="1" height="11" fill="#707070"/><rect x="510" y="759" width="1" height="11" fill="#707070"/><rect x="519" y="759" width="1" height="11" fill="#707070"/><rect x="528" y="759" width="1" height="11" fill="#707070"/><rect x="536" y="759" width="1" height="11" fill="#707070"/><rect x="545" y="759" width="1" height="11" fill="#707070"/><rect x="553" y="759" width="1" height="11" fill="#707070"/><rect x="562" y="759" width="1" height="11" fill="#707070"/><rect x="570" y="759" width="1" height="25" fill="#5a5a5a"/><rect x="579" y="759" width="1" height="11" fill="#707070"/><rect x="588" y="759" width="1" height="11" fill="#707070"/><rect x="596" y="759" width="1" height="11" fill="#707070"/><rect x="605" y="759" width="1" height="11" fill="#707070"/><rect x="614" y="759" width="1" height="11" fill="#707070"/><rect x="622" y="759" width="1" height="11" fill="#707070"/><rect x="631" y="759" width="1" height="11" fill="#707070"/><rect x="639" y="759" width="1" height="11" fill="#707070"/><rect x="648" y="759" width="1" height="11" fill="#707070"/><rect x="656" y="759" width="1" height="25" fill="#5a5a5a"/><rect x="665" y="759" width="1" height="11" fill="#707070"/><rect x="674" y="759" width="1" height="11" fill="#707070"/><rect x="682" y="759" width="1" height="11" fill="#707070"/><rect x="691" y="759" width="1" height="11" fill="#707070"/><rect x="700" y="759" width="1" height="11" fill="#707070"/><rect x="708" y="759" width="1" height="11" fill="#707070"/><rect x="717" y="759" width="1" height="11" fill="#707070"/><rect x="725" y="759" width="1" height="11" fill="#707070"/><rect x="734" y="759" width="1" height="11" fill="#707070"/><rect x="742" y="759" width="1" height="25" fill="#5a5a5a"/><rect x="751" y="759" width="1" height="11" fill="#707070"/><rect x="760" y="759" width="1" height="11" fill="#707070"/><rect x="768" y="759" width="1" height="11" fill="#707070"/><rect x="777" y="759" width="1" height="11" fill="#707070"/><rect x="786" y="759" width="1" height="11" fill="#707070"/><rect x="794" y="759" width="1" height="11" fill="#707070"/><rect x="803" y="759" width="1" height="11" fill="#707070"/><rect x="811" y="759" width="1" height="11" fill="#707070"/><rect x="820" y="759" width="1" height="11" fill="#707070"/><rect x="828" y="759" width="1" height="25" fill="#5a5a5a"/><rect x="837" y="759" width="1" height="11" fill="#707070"/><rect x="846" y="759" width="1" height="11" fill="#707070"/><rect x="854" y="759" width="1" height="11" fill="#707070"/><rect x="863" y="759" width="1" height="11" fill="#707070"/><rect x="872" y="759" width="1" height="11" fill="#707070"/><rect x="880" y="759" width="1" height="11" fill="#707070"/><rect x="889" y="759" width="1" height="11" fill="#707070"/><rect x="897" y="759" width="1" height="11" fill="#707070"/><rect x="906" y="759" width="1" height="11" fill="#707070"/><rect x="914" y="759" width="1" height="25" fill="#5a5a5a"/><text x="140.5" y="780.500" text-anchor="middle" font-size="11" font-family="Liberation Sans, sans-serif" fill="#000" letter-spacing="-0.2">10</text><text x="226.5" y="780.500" text-anchor="middle" font-size="11" font-family="Liberation Sans, sans-serif" fill="#000" letter-spacing="-0.2">20</text><text x="312.5" y="780.500" text-anchor="middle" font-size="11" font-family="Liberation Sans, sans-serif" fill="#000" letter-spacing="-0.2">30</text><text x="398.5" y="780.500" text-anchor="middle" font-size="11" font-family="Liberation Sans, sans-serif" fill="#000" letter-spacing="-0.2">40</text><text x="484.5" y="780.500" text-anchor="middle" font-size="11" font-family="Liberation Sans, sans-serif" fill="#000" letter-spacing="-0.2">50</text><text x="570.5" y="780.500" text-anchor="middle" font-size="11" font-family="Liberation Sans, sans-serif" fill="#000" letter-spacing="-0.2">60</text><text x="656.5" y="780.500" text-anchor="middle" font-size="11" font-family="Liberation Sans, sans-serif" fill="#000" letter-spacing="-0.2">70</text><text x="742.5" y="780.500" text-anchor="middle" font-size="11" font-family="Liberation Sans, sans-serif" fill="#000" letter-spacing="-0.2">80</text><text x="828.5" y="780.500" text-anchor="middle" font-size="11" font-family="Liberation Sans, sans-serif" fill="#000" letter-spacing="-0.2">90</text><text x="914.5" y="780.500" text-anchor="middle" font-size="11" font-family="Liberation Sans, sans-serif" fill="#000" letter-spacing="-0.2">100</text>
<rect x="54" y="759" width="1" height="12" fill="#1e4a50"/>
<text x="54.500" y="780.500" text-anchor="middle" font-size="11" font-family="Liberation Sans, sans-serif" fill="#143a40">0</text>
<!-- mini curve editor icon -->
<g stroke="#000" fill="none" stroke-width="1"><rect x="13.500" y="763.500" width="16" height="5"/><path d="M15,767 Q18,764 21,766 T28,765"/><rect x="13.500" y="776.500" width="16" height="2.500"/><path d="M17.500,775 V770 M15.500,772 L17.500,770 L19.500,772 M25.500,770 V775 M23.500,773 L25.500,775 L27.500,773"/></g>
</svg>
<!-- STATUS BAR -->
<div class="a" style="left:0;top:786px;width:1152px;height:48px;background:#c5c5c5;"></div>
<div class="a" style="left:0;top:834px;width:93px;height:2px;background:#3a8a3a;"></div>
<div class="a" style="left:93px;top:834px;width:1059px;height:2px;background:#2a6ad8;"></div>
<div class="sunk" style="left:2px;top:787px;width:97px;height:21px;background:#ddc7c6;border-width:1px 2px 2px 1px;border-color:#77776a #f2f2f2 #f2f2f2 #77776a;"></div>
<div class="sunk" style="left:2px;top:810px;width:97px;height:23px;background:#ebebeb;border-width:1px 2px 2px 1px;border-color:#77776a #f8f8f8 #f8f8f8 #77776a;"></div>
<div class="sep" style="left:104px;top:786px;height:48px;background:#777;"></div>
<div class="sunk" style="left:107px;top:788px;width:200px;height:21px;background:#c5c5c5;border-color:#666 #f2f2f2 #f2f2f2 #666;"></div>
<div class="x" style="left:113px;top:792px;">1 Object Selected</div>
<div class="sunk" style="left:107px;top:813px;width:499px;height:22px;background:#c5c5c5;border-color:#666 #f2f2f2 #f2f2f2 #666;border-bottom:0;"></div>
<div class="x" style="left:113px;top:817px;">Zoom</div>
<div class="x" style="left:362px;top:792px;font-size:12px;">X:</div>
<div class="sunk" style="left:373px;top:788px;width:58px;height:21px;background:#e5e5e7;border-width:2px 1px 1px 2px;border-color:#222 #f2f2f2 #f2f2f2 #222;"></div>
<div class="x" style="left:444px;top:792px;font-size:12px;">Y:</div>
<div class="sunk" style="left:455px;top:788px;width:58px;height:21px;background:#e5e5e7;border-width:2px 1px 1px 2px;border-color:#222 #f2f2f2 #f2f2f2 #222;"></div>
<div class="x" style="left:526px;top:792px;font-size:12px;">Z:</div>
<div class="sunk" style="left:537px;top:788px;width:58px;height:21px;background:#e5e5e7;border-width:2px 1px 1px 2px;border-color:#222 #f2f2f2 #f2f2f2 #222;"></div>
<div class="sunk" style="left:609px;top:788px;width:100px;height:21px;background:#c5c5c5;border-color:#666 #f2f2f2 #f2f2f2 #666;"></div>
<div class="x" style="left:615px;top:792px;">Grid = 10.0</div>
<div class="sunk" style="left:609px;top:813px;width:100px;height:22px;background:#c5c5c5;border-color:#666 #f2f2f2 #f2f2f2 #666;border-bottom:0;"></div>
<div class="x" style="left:615px;top:817px;">Add Time Tag</div>
<div class="rb" style="left:710px;top:787px;width:44px;height:44px;"></div>
<div class="rb" style="left:758px;top:787px;width:47px;height:22px;line-height:20px;"><span class="s">Auto Key</span></div>
<div class="rb" style="left:758px;top:810px;width:47px;height:21px;line-height:19px;"><span class="s">Set Key</span></div>
<div class="sunk" style="left:808px;top:788px;width:115px;height:20px;border-width:2px;border-color:#3a3a3a #f6f6f6 #f6f6f6 #3a3a3a;"></div>
<div class="x" style="left:813px;top:791px;">Selected</div>
<div class="a" style="left:905px;top:790px;width:16px;height:16px;box-sizing:border-box;background:#ece9d8;border:1px solid;border-color:#fff #6a6a60 #6a6a60 #fff;"></div>
<div class="a" style="left:909px;top:796px;border:4px solid transparent;border-top:4px solid #000;border-bottom:0;"></div>
<div class="rb" style="left:808px;top:811px;width:115px;height:20px;line-height:18px;"><span class="s">Key Filters...</span></div>
<div class="sunk" style="left:955px;top:811px;width:64px;height:19px;background:#e5e5e7;border-width:2px 1px 1px 2px;border-color:#222 #f2f2f2 #f2f2f2 #222;"></div>
<div class="x" style="left:960px;top:814px;">0</div>
<div class="spin" style="left:1020px;top:812px;"></div>
<div class="a" style="left:969px;top:783px;width:181px;height:1px;background:#666;"></div>
<!-- bottom icons -->
<svg class="a" style="left:700px;top:784px" width="452" height="50" viewBox="700 784 452 50">
<!-- key -->
<circle cx="724" cy="808" r="4.200" fill="none" stroke="#000" stroke-width="2.300"/><rect x="728.500" y="806.500" width="15.500" height="3" fill="#000"/><rect x="736.500" y="809" width="3" height="4" fill="#000"/><rect x="741" y="809" width="3" height="3.500" fill="#000"/>
<!-- lock & abs (drawn elsewhere) -->
<!-- playback row1 -->
<g fill="#000">
<rect x="932" y="794" width="2" height="8"/><path d="M941,794 V802 L934.500,798 Z M948,794 V802 L941.500,798 Z"/>
<path d="M967,794 V802 L960,798 Z"/><rect x="968.500" y="794" width="1.600" height="8"/><rect x="971.500" y="794" width="1.600" height="8"/>
<path d="M986,793.500 V801.500 L993,797.500 Z"/>
<rect x="1005" y="794" width="1.600" height="8"/><rect x="1008" y="794" width="1.600" height="8"/><path d="M1011,794 V802 L1018,798 Z"/>
<path d="M1030,794 V802 L1036.500,798 Z M1037,794 V802 L1043.500,798 Z"/><rect x="1044.500" y="794" width="2" height="8"/>
<polygon points="995,806 999,806 999,802"/>
<!-- key mode -->
<rect x="935" y="815" width="1.400" height="8"/><rect x="945" y="815" width="1.400" height="8"/><path d="M940.500,815.500 V822.500 L937,819 Z M941.500,815.500 V822.500 L945,819 Z"/>
</g>
<rect x="982" y="790.500" width="15" height="14" fill="none" stroke="#000" stroke-width="2"/>
<g fill="#6b6b6b"><rect x="953" y="790" width="1" height="15"/><rect x="1025" y="790" width="1" height="15"/><rect x="1054" y="788" width="1" height="42"/></g>
<g fill="#efefef"><rect x="954" y="790" width="1" height="15"/><rect x="1026" y="790" width="1" height="15"/><rect x="1055" y="788" width="1" height="42"/></g>
<!-- time config -->
<rect x="1036.500" y="813.500" width="11" height="9" fill="#e8e8e8" stroke="#000"/><rect x="1037" y="814" width="10" height="2" fill="#333"/><circle cx="1045.500" cy="821" r="4.200" fill="#f0f0f0" stroke="#b02020" stroke-width="1.200"/><path d="M1045.500,818.500 V821 H1047.500" stroke="#b02020" fill="none"/>
<!-- zoom button pressed -->
<rect x="1057" y="788" width="22" height="21" fill="#d8d8d8"/><path d="M1057.500,808.500 V788.500 H1079" stroke="#666" fill="none"/>
<circle cx="1065" cy="796" r="5" fill="none" stroke="#2a3aa0" stroke-width="1.500"/><line x1="1069" y1="800" x2="1075" y2="806" stroke="#2a3aa0" stroke-width="2"/>
<!-- zoom all (partly hidden) -->
<path d="M1087,801 L1092,806" stroke="#2a3aa0" stroke-width="2"/>
<!-- zoom extents -->
<g fill="none" stroke="#1a2a8a" stroke-width="1.200"><path d="M1105.500,794 V790.500 H1109 M1117,790.500 H1120.500 V794 M1120.500,800 V803.500 H1117 M1109,803.500 H1105.500 V800"/><rect x="1108.500" y="795.500" width="7" height="7" fill="#d8dcf0"/><path d="M1108.500,795.500 L1111,792.500 H1118 V799.500 L1115.500,802.500 M1115.500,795.500 L1118,792.500"/></g>
<polygon points="1120,808 1124,808 1124,804" fill="#111"/>
<!-- zoom extents all -->
<g fill="none" stroke-width="1.200"><rect x="1135.500" y="790.500" width="9" height="9" stroke="#a02020"/><path d="M1140,790.500 V799.500 M1135.500,795 H1144.500" stroke="#a02020"/><rect x="1129.500" y="797.500" width="7" height="7" fill="#d8dcf0" stroke="#1a2a8a"/><path d="M1129.500,797.500 L1132,794.500 H1139 V801.500 L1136.500,804.500 M1136.500,797.500 L1139,794.500" stroke="#1a2a8a"/></g>
<polygon points="1144,808 1148,808 1148,804" fill="#111"/>
<!-- FOV -->
<path d="M1061,812 L1075,819 L1061,827" fill="#b8b8b8" stroke="#333" stroke-width="1"/><path d="M1059,826 L1078,816" stroke="#333"/>
<polygon points="1076,830 1080,830 1080,826" fill="#111"/>
<!-- pan hand -->
<path d="M1085,820 Q1083,817 1085.500,816.500 L1088,819 V813.500 Q1089,812 1090,813.500 V812.500 Q1091.200,811 1092.400,812.500 V813.500 Q1093.600,812 1094.800,813.500 V815.500 Q1096,814.500 1097,816 V822 Q1097,826 1093,826.500 H1090 Q1087,826 1085,820 Z" fill="#f4f4f4" stroke="#222" stroke-width="1"/>
<polygon points="1098,830 1102,830 1102,826" fill="#111"/>
<!-- arc rotate -->
<g fill="none" stroke="#1a2a8a" stroke-width="1.200"><circle cx="1113" cy="820" r="5.500"/><path d="M1113,811 V822 L1106,827 M1113,822 L1121,824"/></g><path d="M1113,810 L1115,813.500 H1111 Z" fill="#111"/><path d="M1122,824 L1118.500,825.500 L1119,822 Z" fill="#111"/><path d="M1105,828 L1106,824.500 L1108.500,827 Z" fill="#1a2a8a"/>
<polygon points="1120,830 1124,830 1124,826" fill="#111"/>
<!-- min/max -->
<g fill="none" stroke="#1a2a8a" stroke-width="1.300"><rect x="1129.500" y="812.500" width="9" height="9"/><rect x="1135.500" y="818.500" width="8" height="8" fill="#c5c5c5"/></g><path d="M1132,815 L1137,820" stroke="#000" stroke-width="1"/><path d="M1131.500,814.500 h3 l-3,3 Z M1138,821 h-3 l3,-3 Z" fill="#000"/>
<!-- tooltip -->
<rect x="1066.500" y="784.500" width="32" height="16" fill="#ffffe1" stroke="#000"/>
<text x="1070" y="797" font-size="11" font-family="Liberation Sans, sans-serif" fill="#000" letter-spacing="-0.2">Zoom</text>
<!-- mouse cursor -->
<path d="M1067.500,801.500 V817.500 L1071,814 L1074,821 L1076.500,820 L1073.500,813 H1078.500 Z" fill="#fff" stroke="#000" stroke-width="1"/>
</svg>
<!-- lock + abs/rel -->
<svg class="a" style="left:310px;top:788px" width="50" height="22" viewBox="310 788 50 22">
<path d="M317.500,797 V794.500 Q317.500,792.500 320,792.500 Q322.500,792.500 322.500,794.500 V797" fill="none" stroke="#000" stroke-width="1.300"/><rect x="316" y="797" width="8" height="6" fill="#000"/><rect x="316" y="798.500" width="8" height="1" fill="#aaa"/><rect x="316" y="800.500" width="8" height="1" fill="#aaa"/>
<rect x="340.500" y="790.500" width="14" height="14" fill="#c5c5c5" stroke="#000" stroke-width="1.400"/><path d="M347.500,791 V804 M341,797.500 H354" stroke="#000" stroke-width=".8"/><circle cx="347.500" cy="797.500" r="2" fill="#666" stroke="#000" stroke-width=".8"/>
</svg>
</body>
</html>
